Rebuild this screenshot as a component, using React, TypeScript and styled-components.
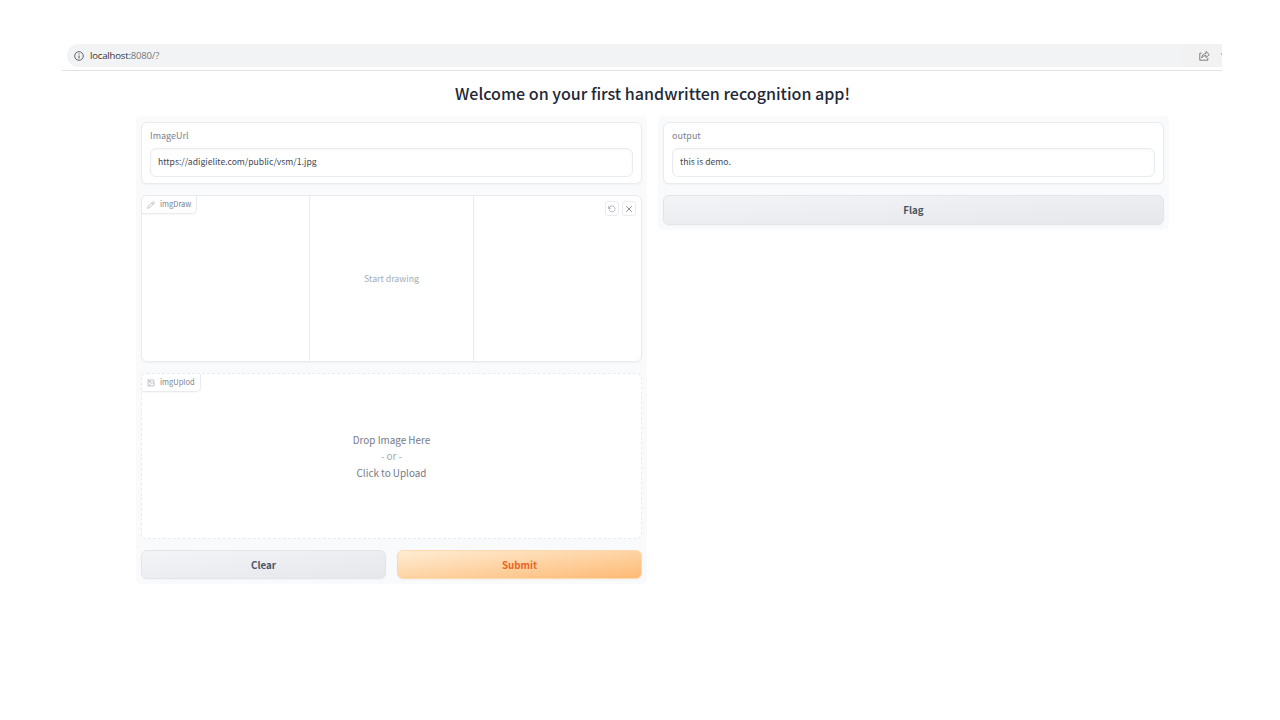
import React from 'react';
import styled, { createGlobalStyle, css } from 'styled-components';

const GlobalStyle = createGlobalStyle`
  * { box-sizing: border-box; }
  html, body { margin: 0; background: #fff; }
  body { width: 1280px; height: 720px; overflow: hidden; }
  body, button, input { font-family: 'Noto Sans CJK SC', 'Noto Sans', sans-serif; }
`;

const Page = styled.div`
  width: 1160px;
  margin: 44px 0 0 62px;
`;

const BrowserBar = styled.header`
  height: 27px;
  padding-left: 5px;
  border-bottom: 1px solid #e1e2e4;
`;

const AddressField = styled.div`
  display: flex;
  align-items: center;
  height: 23px;
  padding: 0 0 0 7px;
  overflow: hidden;
  border-radius: 12px 0 0 12px;
  background: linear-gradient(90deg, #f1f3f4 0 1115px, #f2f2f2 1115px);
  color: #5f6368;
`;

const Address = styled.span`
  flex: 1;
  margin-left: 6px;
  font: 9.6px/23px 'Open Sans', 'Noto Sans', sans-serif;
  letter-spacing: -0.2px;
  color: #74787c;
`;

const Host = styled.span`
  color: #34373b;
`;

const EdgeMark = styled.i`
  width: 1px;
  height: 2px;
  margin: -4px 0 0 11px;
  background: #b5b7b9;
`;

const Title = styled.h1`
  margin: 8px 0 9px 21px;
  height: 28px;
  text-align: center;
  font-size: 16.06px;
  line-height: 28px;
  font-weight: 500;
  color: #1f2937;
`;

const Columns = styled.main`
  display: flex;
  align-items: flex-start;
  gap: 11px;
  margin-left: 74px;
`;

const Column = styled.section`
  display: flex;
  flex-direction: column;
  gap: 11px;
  width: 511px;
  padding: 6px 5px 5px;
  border-radius: 5px;
  background: #f9fafb;
`;

const cardFrame = css`
  border: 1px solid #e9ebee;
  border-radius: 6px;
  background: #fff;
`;

const FieldCard = styled.label`
  ${cardFrame}
  display: block;
  height: 62px;
  padding: 6px 8px 0;
  box-shadow: 0 1px 2px rgba(0, 0, 0, 0.04);
`;

const FieldName = styled.span`
  display: block;
  height: 14px;
  font-size: 9px;
  line-height: 14px;
  color: #7b828e;
`;

const TextField = styled.input`
  display: block;
  width: 100%;
  height: 29px;
  margin-top: 5px;
  padding: 0 7px 3px;
  border: 1px solid #e9ebee;
  border-radius: 6px;
  outline: none;
  background: #fff;
  box-shadow: inset 0 1px 3px rgba(0, 0, 0, 0.04);
  font-size: 8.64px;
  color: #3f4754;
`;

const MediaCard = styled.div<{ $dashed?: boolean }>`
  ${cardFrame}
  border-style: ${p => (p.$dashed ? 'dashed' : 'solid')};
  position: relative;
  display: flex;
  justify-content: center;
  height: ${p => (p.$dashed ? 166 : 167)}px;
  box-shadow: ${p => (p.$dashed ? 'none' : '0 1px 2px rgba(0, 0, 0, 0.04)')};
`;

const MediaTag = styled.div`
  position: absolute;
  top: 0;
  left: 0;
  display: flex;
  align-items: center;
  gap: 5px;
  height: 18px;
  padding: 0 5px;
  border: solid #e9ebee;
  border-width: 0 1px 1px 0;
  border-radius: 5px 0 5px 0;
  background: #fff;
  box-shadow: 0 1px 2px rgba(0, 0, 0, 0.04);
  color: #a3a8b1;
  font-size: 7.5px;
  line-height: 15px;
`;

const TagText = styled.span`
  margin-bottom: 2px;
  color: #7b828e;
`;

const ToolGroup = styled.div`
  position: absolute;
  top: 5px;
  right: 5px;
  display: flex;
  gap: 3px;
`;

const ToolButton = styled.button`
  display: flex;
  align-items: center;
  justify-content: center;
  width: 14px;
  height: 15px;
  padding: 0;
  border: 1px solid #e9ebee;
  border-radius: 3px;
  background: #fff;
  color: #8d939e;
`;

const Canvas = styled.div`
  display: flex;
  align-items: center;
  justify-content: center;
  width: 165px;
  border: solid #e9ebee;
  border-width: 0 1px;
  font-size: 8.75px;
  color: #a5abb5;
`;

const DropZone = styled.div`
  display: flex;
  flex-direction: column;
  justify-content: center;
  padding-top: 1px;
  text-align: center;
  font-size: 9.9px;
  line-height: 16.5px;
  color: #737a85;
`;

const DropOr = styled.span`
  color: #a1a7b1;
`;

const ButtonRow = styled.div`
  display: flex;
  gap: 11px;
`;

const ActionButton = styled.button<{ $primary?: boolean; $tall?: boolean }>`
  flex: 1;
  height: ${p => (p.$tall ? 30 : 29)}px;
  padding: ${p => (p.$tall ? '0' : '1px 0 0')};
  border: 1px solid ${p => (p.$primary ? '#fed7aa' : '#e3e5e8')};
  border-radius: 6px;
  background: ${p =>
    p.$primary
      ? 'linear-gradient(to bottom right, #ffedd5, #fdba74)'
      : 'linear-gradient(to bottom right, #f3f4f6, #e5e7eb)'};
  box-shadow: 0 1px 2px rgba(0, 0, 0, 0.03);
  color: ${p => (p.$primary ? '#ea6526' : '#4b5563')};
  font-size: 9.75px;
  font-weight: 700;
`;

const InfoIcon = () => (
  <svg width="10" height="10" viewBox="0 0 10 10" fill="none" stroke="currentColor">
    <circle cx="5" cy="5" r="4.3" strokeWidth="1" />
    <path d="M5 4.4v3M5 2.4v1.1" strokeWidth="1.1" />
  </svg>
);

const ShareIcon = () => (
  <svg width="11" height="11" viewBox="0 0 11 11" fill="none" stroke="#6f7275" strokeWidth="0.9">
    <path d="M2.6 3.2H.8v7h8V8" />
    <path d="M2.8 7.8C3.1 5.1 4.7 3.6 7 3.6V1.5l3.3 3.1L7 7.6V5.6c-1.8 0-3.2.7-4.2 2.2z" strokeLinejoin="round" />
  </svg>
);

const PencilIcon = () => (
  <svg width="8" height="8" viewBox="0 0 24 24" fill="none" stroke="currentColor" strokeWidth="1.9" strokeLinecap="round" strokeLinejoin="round">
    <path d="M17 3a2.83 2.83 0 1 1 4 4L7.5 20.5 2 22l1.5-5.5z" />
    <path d="m14.5 5.5 4 4" />
  </svg>
);

const ImageIcon = () => (
  <svg width="8" height="8" viewBox="0 0 24 24" fill="none" stroke="currentColor" strokeWidth="2" strokeLinecap="round" strokeLinejoin="round">
    <rect x="3" y="3" width="18" height="18" rx="2" />
    <circle cx="8.5" cy="8.5" r="1.5" />
    <path d="M21 15l-5-5L5 21" />
  </svg>
);

const UndoIcon = () => (
  <svg width="8" height="8" viewBox="0 0 24 24" fill="none" stroke="currentColor" strokeWidth="2" strokeLinecap="round" strokeLinejoin="round">
    <path d="M2 4v6h6" />
    <path d="M3.5 15a9 9 0 1 0 2-9.4L2 10" />
  </svg>
);

const CloseIcon = () => (
  <svg width="8" height="8" viewBox="0 0 8 8" fill="none" stroke="currentColor" strokeWidth="1">
    <path d="M1.2 1.2l5.6 5.6M6.8 1.2L1.2 6.8" />
  </svg>
);

const Field = ({ name, value }: { name: string; value: string }) => (
  <FieldCard>
    <FieldName>{name}</FieldName>
    <TextField defaultValue={value} spellCheck={false} />
  </FieldCard>
);

export default function App() {
  return (
    <>
      <GlobalStyle />
      <Page>
        <BrowserBar>
          <AddressField>
            <InfoIcon />
            <Address>
              <Host>localhost:</Host>8080/?
            </Address>
            <ShareIcon />
            <EdgeMark />
          </AddressField>
        </BrowserBar>
        <Title>Welcome on your first handwritten recognition app!</Title>
        <Columns>
          <Column>
            <Field name="ImageUrl" value="https://adigielite.com/public/vsm/1.jpg" />
            <MediaCard>
              <Canvas>Start drawing</Canvas>
              <MediaTag>
                <PencilIcon />
                <TagText>imgDraw</TagText>
              </MediaTag>
              <ToolGroup>
                <ToolButton aria-label="Undo"><UndoIcon /></ToolButton>
                <ToolButton aria-label="Clear drawing"><CloseIcon /></ToolButton>
              </ToolGroup>
            </MediaCard>
            <MediaCard $dashed>
              <MediaTag>
                <ImageIcon />
                <TagText>imgUplod</TagText>
              </MediaTag>
              <DropZone>
                <span>Drop Image Here</span>
                <DropOr>- or -</DropOr>
                <span>Click to Upload</span>
              </DropZone>
            </MediaCard>
            <ButtonRow>
              <ActionButton>Clear</ActionButton>
              <ActionButton $primary>Submit</ActionButton>
            </ButtonRow>
          </Column>
          <Column>
            <Field name="output" value="this is demo." />
            <ButtonRow>
              <ActionButton $tall>Flag</ActionButton>
            </ButtonRow>
          </Column>
        </Columns>
      </Page>
    </>
  );
}
